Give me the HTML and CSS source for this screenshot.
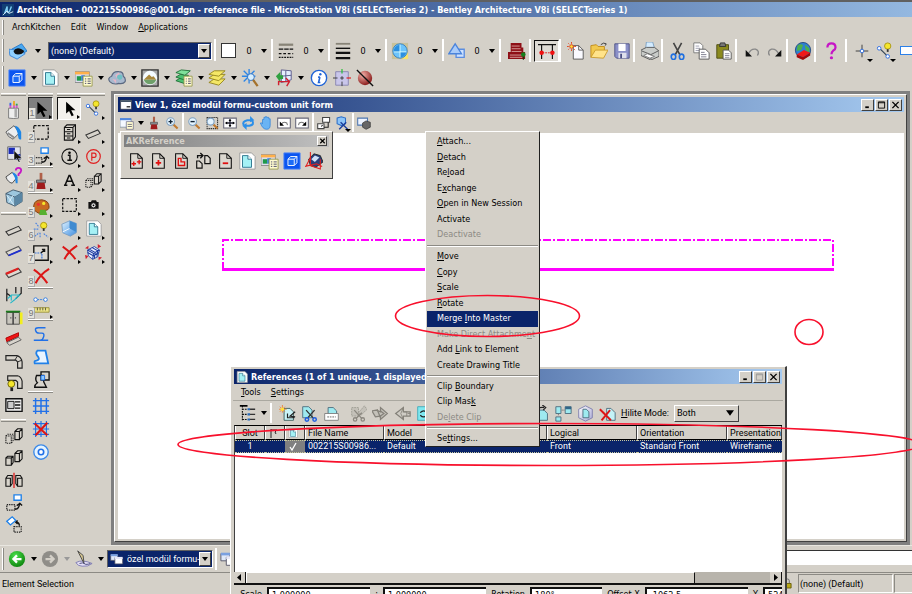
FILE: index.html
```
<!DOCTYPE html>
<html lang="en">
<head>
<meta charset="utf-8">
<title>ArchKitchen - MicroStation V8i</title>
<link rel="stylesheet" href="styles.css">
</head>
<body>
<svg class="sprite" aria-hidden="true">
<defs>
<linearGradient id="gb" x1="0" y1="0" x2="1" y2="1"><stop offset="0" stop-color="#dff2ff"/><stop offset="1" stop-color="#3f8ee0"/></linearGradient>
<linearGradient id="gm" x1="0" y1="0" x2="1" y2="1"><stop offset="0" stop-color="#fff"/><stop offset="1" stop-color="#a9a9d4"/></linearGradient>
<radialGradient id="gr" cx=".35" cy=".3" r=".8"><stop offset="0" stop-color="#f3b0a8"/><stop offset="1" stop-color="#7e0d0d"/></radialGradient>
<radialGradient id="gg" cx=".4" cy=".3" r=".8"><stop offset="0" stop-color="#4be04b"/><stop offset="1" stop-color="#067a06"/></radialGradient>
</defs>
<symbol id="model" viewBox="0 0 20 20"><path d="M3 8l11-6 6 8-11 7z" fill="#4aa8f0" stroke="#2476c8"/><path d="M0 8l10 1 8 4-9 6-8-4z" fill="#8fd0ff" stroke="#3a86d8"/><path d="M5 10q3-5 9-2l3 2q-2 4-7 4-4 0-5-4" fill="#111"/></symbol>
<symbol id="dashes" viewBox="0 0 20 20"><path d="M2 3h16" stroke="#888478" stroke-width="2.500"/><path d="M2 8h16" stroke="#111" stroke-width="1.300" stroke-dasharray="5 1"/><path d="M2 13h16" stroke="#111" stroke-width="1.300" stroke-dasharray="3 2"/><path d="M2 17h16" stroke="#111" stroke-width="1.300" stroke-dasharray="2 1"/></symbol>
<symbol id="weights" viewBox="0 0 20 20"><path d="M2 2h16" stroke="#888478" stroke-width="2"/><path d="M2 7h16" stroke="#111" stroke-width="1.500"/><path d="M2 12h16M2 18h16" stroke="#111" stroke-width="2.500"/></symbol>
<symbol id="globe" viewBox="0 0 20 20"><path d="M1 1h18v18H1z" fill="#c9c29a"/><path d="M12 12h7v7h-7z" fill="#f7e36c"/><circle cx="10" cy="10" r="8" fill="#6cc4fb" stroke="#3a7fbd"/><path d="M3 11h7V3q-7 1-7 8M10 11h7q-1 6-7 6z" fill="#2b8fe0"/><path d="M10 3v14M3 11h14" stroke="#dff" fill="none"/></symbol>
<symbol id="shapes" viewBox="0 0 20 20"><path d="M9 8h9v9H9z" fill="#cfe2ff" stroke="#5b8de0" stroke-width="1.500"/><path d="M8 2l7 11H1z" fill="#a9cbfa" stroke="#4b84dc" stroke-width="1.500"/></symbol>
<symbol id="steps" viewBox="0 0 20 20"><path d="M3 1h12v5h2v5h2v8H0v-8h3z" fill="#8e0f16"/><path d="M4 4.500h9M4 7.500h10M4 10.500h11M2 14.500h14M2 17h14" stroke="#d9a5a0"/><path d="M17 14v6" stroke="#0a3a0a"/><circle cx="17" cy="14" r="2.500" fill="#15801c"/></symbol>
<symbol id="snap" viewBox="0 0 20 20"><path d="M0 3h20M4 3v16M16 3v16" stroke="#111" stroke-width="1.300" fill="none"/><path d="M5 12h10" stroke="#e01010" stroke-dasharray="2 1"/><circle cx="4" cy="12" r="2.500" fill="#f01010"/><circle cx="16" cy="12" r="2.500" fill="#f01010"/></symbol>
<symbol id="new" viewBox="0 0 20 20"><path d="M7 4h6l5 5v10H7z" fill="#fafaff" stroke="#555"/><path d="M13 4v5h5" fill="none" stroke="#555"/><circle cx="5" cy="5" r="2" fill="#ffe23a" stroke="#e0401a"/><path d="M5 0v2M5 8v2M0 5h2M8 5h2M1.500 1.500l1 1M8 8l1 1M1.500 8.500l1-1" stroke="#e0401a"/></symbol>
<symbol id="open" viewBox="0 0 20 20"><path d="M1 17V4l6-1 2 2h7v4" fill="#f1c84e" stroke="#c08a1a"/><path d="M1 17L6 9h14l-5 9z" fill="#ffe38a" stroke="#c99a2a"/><path d="M12 3q3-3 6-1l-1 2" stroke="#333" fill="none"/></symbol>
<symbol id="save" viewBox="0 0 20 20"><path d="M2 2h16v16H4l-2-2z" fill="#8b90c8" stroke="#4c5084"/><path d="M6 2h8v8H6z" fill="#fff"/><path d="M6 12h9v6H6z" fill="#dfe0ec"/><path d="M8 13h2v5H8z" fill="#4c5084"/></symbol>
<symbol id="print" viewBox="0 0 20 20"><path d="M5 8L6 0h7l2 7z" fill="#d4ecff" stroke="#7a9ec0"/><path d="M0 9l6-3h9l5 4v6l-9 4-11-5z" fill="#c9ccc9" stroke="#555"/><path d="M1 10l10 4 8-4M11 14v5" stroke="#555" fill="none"/><path d="M3 15l7 3 5-2-8-3z" fill="#fff" stroke="#777"/></symbol>
<symbol id="cut" viewBox="0 0 20 20"><path d="M5 1l7 13M14 1L7 14" stroke="#444" stroke-width="1.800"/><g fill="none" stroke="#1f6fe0" stroke-width="1.800"><ellipse cx="5" cy="16.500" rx="2.500" ry="3"/><ellipse cx="14" cy="16.500" rx="2.500" ry="3"/></g></symbol>
<symbol id="copy" viewBox="0 0 20 20"><path d="M2 1h7l3 3v8H2z" fill="#fff" stroke="#777"/><path d="M4 4.500h4M4 7h5M4 9.500h5" stroke="#99a"/><path d="M8 8h7l4 4v7H8z" fill="#fff" stroke="#555"/><path d="M10 11.500h4M10 14h6M10 16.500h6" stroke="#778"/></symbol>
<symbol id="paste" viewBox="0 0 20 20"><path d="M2 3h13v15H2z" fill="#8b8a1e" stroke="#4a4a10"/><path d="M5 5l1-4h5l1 4z" fill="#777" stroke="#333"/><path d="M9 9h6l3 3v7H9z" fill="#fff" stroke="#555"/><path d="M11 13h5M11 15h5M11 17h5" stroke="#889"/></symbol>
<symbol id="undo" viewBox="0 0 20 20"><path d="M6 13q3-6 8-5 5 2 2 7" fill="none" stroke="#888" stroke-width="1.500"/><path d="M3 9v7h7z" fill="#111"/></symbol>
<symbol id="redo" viewBox="0 0 20 20"><path d="M14 13q-3-6-8-5-5 2-2 7" fill="none" stroke="#888" stroke-width="1.500"/><path d="M17 9v7h-7z" fill="#111"/></symbol>
<symbol id="help" viewBox="0 0 20 20"><path d="M6 6q0-4.500 4.500-4.500T15 6q0 2-2.500 3.500-2 1.500-2 4" fill="none" stroke="#c616c6" stroke-width="2.500"/><circle cx="10.500" cy="17.500" r="1.800" fill="#c616c6"/></symbol>
<symbol id="book" viewBox="0 0 20 20"><circle cx="10" cy="9" r="8.500" fill="#2e80d0" stroke="#234a80"/><path d="M4 4q4-3 6 0l-2 5-5 1zM12 3l5 4v5l-4-3z" fill="#4eb04a"/><path d="M3 14l8-5 7 3-8 5z" fill="#f01818"/><path d="M3 14v3l7 3 8-5v-3l-8 5z" fill="#a00808"/></symbol>
<symbol id="cross" viewBox="0 0 20 20"><path d="M10 3v14M3 10h14" stroke="#333"/><circle cx="10" cy="10" r="2" fill="#fff" stroke="#2668e0"/></symbol>
<symbol id="bulb" viewBox="0 0 20 20"><path d="M4 7l9 9" stroke="#345" stroke-width="1.300"/><circle cx="3.500" cy="7" r="2" fill="#fff" stroke="#2668e0"/><circle cx="13" cy="16" r="2" fill="#fff" stroke="#2668e0"/><circle cx="13" cy="4.500" r="3.500" fill="#f5e62c" stroke="#a89510"/><path d="M12 8h2v3h-2z" fill="#333"/></symbol>
<symbol id="cube" viewBox="0 0 20 20"><path d="M1 1h18v18H1z" fill="#0b55f0" stroke="#4f86f5"/><path d="M5.500 8h7v7h-7zM5.500 8l3-3h7l-3 3M15.500 5v7l-3 3" fill="#1c6cf6" stroke="#fff"/></symbol>
<symbol id="page" viewBox="0 0 20 20"><path d="M2 1h13l4 4v14H2z" fill="#fff" stroke="#999"/><path d="M5 4h6l4 4v9H5z" fill="#a5f1f5" stroke="#26708a"/><path d="M11 4v4h4" fill="#fff" stroke="#26708a"/></symbol>
<symbol id="levels" viewBox="0 0 20 20"><path d="M0 3h16v12H0z" fill="#dde" stroke="#888"/><path d="M0 3h16v3H0z" fill="#ffb04a"/><path d="M2 8h5v5H2z" fill="#1f9a4a"/><path d="M7 7h4v6H7z" fill="#2878e0"/><path d="M9 8h10v11H9z" fill="#fffbd0" stroke="#999a50"/><path d="M11 11h1.500M14 11h3.500M11 13.500h1.500M14 13.500h3.500M11 16h1.500M14 16h3.500" stroke="#446"/></symbol>
<symbol id="cloud" viewBox="0 0 20 20"><path d="M2 14q-3-4 2-6 2-6 8-5 5 0 5 5 3 2 2 6-2 3-7 2-6 2-10-2z" fill="#a9b9ce" stroke="#5a6880" stroke-width="1.300"/><path d="M8 7l4-3 3 5-4 3zM5 11l4 1v4z" fill="#e6b6c6"/><circle cx="13" cy="9" r="3" fill="#6fc0c4"/></symbol>
<symbol id="photo" viewBox="0 0 20 20"><path d="M1 1h18v18H1z" fill="#aaa" stroke="#333" stroke-width="1.500"/><circle cx="10" cy="10" r="8" fill="#f4fbff"/><path d="M3 12l6-6 3 3 2-1 3 4z" fill="#a9883d"/><path d="M3 12h14q-2 5-7 5t-7-5z" fill="#6fa06a"/></symbol>
<symbol id="layersg" viewBox="0 0 20 20"><g stroke="#207038"><path d="M1 13l5-3 9 1-5 5z" fill="#4cc070"/><path d="M1 9l5-3 9 1-5 5z" fill="#4cc070"/><path d="M1 4l6-3 10 1-6 5z" fill="#7fe09a"/></g><path d="M10 8h9v11h-9z" fill="#fffbd0" stroke="#999a50"/><path d="M12 11h1M14.500 11h3M12 13.500h1M14.500 13.500h3M12 16h1M14.500 16h3" stroke="#446"/></symbol>
<symbol id="layersy" viewBox="0 0 20 20"><g stroke="#93841c" fill="#f4e766"><path d="M1 15l6-4h12l-7 7z"/><path d="M1 10l6-4h12l-7 7z"/><path d="M1 6l6-4h12l-7 6z"/></g></symbol>
<symbol id="star" viewBox="0 0 20 20"><path d="M9 0v16M1 8h15M3 2l12 12M15 2L3 14" stroke="#2b86e8" stroke-width="1.500"/><circle cx="11" cy="9" r="3.800" fill="#d7efff" stroke="#2f6fc0"/><path d="M13.500 12l5 7" stroke="#a5722c" stroke-width="2.500"/></symbol>
<symbol id="axis" viewBox="0 0 20 20"><path d="M7 1l11 1v10l-11 3z" fill="#e6efff" stroke="#558"/><path d="M7 8l11-1M12 2v12" stroke="#558"/><path d="M1 8l5-5v4h3v4H6v4z" fill="#30a040"/><path d="M4 13v5M4 14h11M12 10l4 4-3 5" fill="none" stroke="#d02030" stroke-width="1.600"/></symbol>
<symbol id="info" viewBox="0 0 20 20"><circle cx="10" cy="10" r="8.500" fill="#fff" stroke="#1f63d6" stroke-width="1.500"/><path d="M11 9l-1.500 6h2M9 9h2" stroke="#1f63d6" stroke-width="1.800" fill="none"/><circle cx="11.500" cy="5.800" r="1.300" fill="#1f63d6"/></symbol>
<symbol id="target" viewBox="0 0 20 20"><path d="M3 3h14v15H3z" fill="#c9c6ea" stroke="#8683b0"/><path d="M10 0v5" stroke="#1fbf2f" stroke-width="1.300"/><path d="M15 10h5" stroke="#e02020" stroke-width="1.300"/><path d="M0 10h5M10 14v5M8 10h4M10 8v4" stroke="#333"/></symbol>
<symbol id="noball" viewBox="0 0 20 20"><circle cx="10" cy="10" r="8" fill="url(#gr)"/><path d="M1 1l18 18" stroke="#111" stroke-width="1.500"/></symbol>
<symbol id="jar" viewBox="0 0 20 20"><path d="M6 8V4M10 8V2M13 8V4" stroke="#dd4fd0" stroke-width="2"/><path d="M6 5V2" stroke="#2b6fe8" stroke-width="2"/><path d="M10 5V0" stroke="#e8b020" stroke-width="2"/><path d="M13 5V3" stroke="#30b050" stroke-width="2"/><path d="M4 8h11v11q-5 1-11 0z" fill="#eee" stroke="#777"/><path d="M12 9v9" stroke="#aaa" stroke-width="3"/></symbol>
<symbol id="bucket" viewBox="0 0 20 20"><path d="M1 10l9-7 6 8-7 7q-6-2-8-8z" fill="#eceef0" stroke="#555"/><path d="M3 11l7 5" stroke="#888" stroke-width="2"/><path d="M11 3q4 0 7 7v8q-2 1-3-1l-1-6z" fill="#1e86e6"/></symbol>
<symbol id="bucketq" viewBox="0 0 20 20"><path d="M1 11l7-5 5 6-5 6q-5-1-7-7z" fill="#eceef0" stroke="#444"/><path d="M8 6q4 0 6 5v7h-2l-1-6z" fill="#1e86e6"/><path d="M12 4q0-3 3-3t3 3q0 2-3 4v2" fill="none" stroke="#c616c6" stroke-width="2"/></symbol>
<symbol id="check" viewBox="0 0 20 20"><path d="M3 2h14v14H3z" fill="#dfe2f0" stroke="#666"/><path d="M4 3h7v7H4zM11 10h6v6h-6z" fill="#1a2ab8"/><path d="M10 6l9 9h-4l2 4h-2l-2-4-3 2z" fill="#111" stroke="#fff" stroke-width=".5"/></symbol>
<symbol id="glass" viewBox="0 0 20 20"><path d="M1 5l8-4 10 3v10l-8 5-9-4z" fill="#9cc6de" stroke="#40586c"/><path d="M1 5l10 4 8-5M11 9v10" fill="none" stroke="#40586c"/><path d="M11 9l8-5v10l-8 5z" fill="#5a86a4"/><path d="M4 15l5-8M2 7l8 11" stroke="#dceffa"/></symbol>
<symbol id="wall" viewBox="0 0 20 20"><path d="M1 13l14-6 3 4-14 6z" fill="#d8d4cc" stroke="#333" stroke-width="1.200"/></symbol>
<symbol id="wallb" viewBox="0 0 20 20"><path d="M1 11l14-6 3 4-14 6z" fill="#dedad2" stroke="#555" stroke-width="1.200"/><path d="M4 15l14-6" stroke="#2030d0" stroke-width="2"/></symbol>
<symbol id="wallr" viewBox="0 0 20 20"><path d="M1 11l14-6 3 4-14 6z" fill="#dedad2" stroke="#444" stroke-width="1.200"/><path d="M1 11l14-6" stroke="#e02020" stroke-width="2.500"/></symbol>
<symbol id="wallf" viewBox="0 0 20 20"><path d="M1 9l14-6v4L2 13z" fill="#f01515" stroke="#a00"/><path d="M2 14l13-6 3 3-13 6z" fill="#d8d4cc" stroke="#555"/></symbol>
<symbol id="join" viewBox="0 0 20 20"><path d="M2 3v14M2 8l4 3M12 1v7M18 1v7l-6 6" fill="none" stroke="#222" stroke-width="1.400"/><path d="M3 14l4-4h9l-5 5-5 4M7 10v6" fill="none" stroke="#28b8c8" stroke-width="1.300"/></symbol>
<symbol id="door" viewBox="0 0 20 20"><path d="M2 5h14v13H2z" fill="#c9c6be" stroke="#444"/><path d="M9 5v13M6 11h1M11 11h1" stroke="#333" stroke-width="1.500"/><path d="M1 4h16" stroke="#1b7a1b" stroke-width="2"/><path d="M18 5v13" stroke="#f2ee1c" stroke-width="3"/></symbol>
<symbol id="pipe" viewBox="0 0 20 20"><path d="M1 4h12q5 1 6 7v7h-5v-7l-2-2H1z" fill="#d8d4cc" stroke="#222" stroke-width="1.300"/><path d="M11 9l3-5M14 11l5-2" stroke="#222"/></symbol>
<symbol id="pipeb" viewBox="0 0 20 20"><path d="M3 2h11q4 1 5 6v8h-5V9l-2-2H3z" fill="#d8d4cc" stroke="#222" stroke-width="1.300"/><circle cx="7" cy="11" r="3.800" fill="#f5e62c" stroke="#665c08"/><path d="M6 15h3v4H6z" fill="#222"/></symbol>
<symbol id="panel" viewBox="0 0 20 20"><path d="M1 3h18v14H1z" fill="#eee" stroke="#111" stroke-width="1.500"/><path d="M3 6h7v8H3z" fill="#ccc" stroke="#111"/><path d="M11 6.500h6M11 10h6M11 13.500h6" stroke="#111" stroke-width="1.500"/></symbol>
<symbol id="cubed" viewBox="0 0 20 20"><path d="M1 10h6v8H1zM1 10l2-2h6v7l-2 3" fill="none" stroke="#222" stroke-width="1.200" stroke-dasharray="1.500 1"/><path d="M11 5h5v9h-5zM11 5l3-3h5v9l-3 3M16 5l3-3" fill="#d8d4cc" stroke="#111" stroke-width="1.200"/></symbol>
<symbol id="cubes" viewBox="0 0 20 20"><path d="M1 10h6v8H1zM1 10l2-2h6v7l-2 3M7 10l2-2M11 5h5v9h-5zM11 5l3-3h5v9l-3 3M16 5l3-3" fill="#d8d4cc" stroke="#111" stroke-width="1.200"/></symbol>
<symbol id="mirror" viewBox="0 0 20 20"><path d="M1 8h5v9H1zM1 8l2-3h5v9l-2 3M19 8h-5v9h5zM19 8l-2-3h-5v9l2 3" fill="#d8d4cc" stroke="#111" stroke-width="1.200"/><path d="M10 2v17" stroke="#e02020" stroke-width="1.500"/></symbol>
<symbol id="moveb" viewBox="0 0 20 20"><path d="M10 2h8v6h-8z" fill="#fff" stroke="#1f80e8" stroke-width="1.500"/><path d="M2 13h9v6H2z" fill="none" stroke="#222" stroke-width="1.300" stroke-dasharray="1.500 1"/><path d="M11 18q5 0 5-6l-3 2M16 11l3 3" stroke="#111" fill="none" stroke-width="1.500"/></symbol>
<symbol id="rotb" viewBox="0 0 20 20"><path d="M2 7l6-5 4 4-6 5z" fill="#fff" stroke="#1f80e8" stroke-width="1.500"/><path d="M10 13h8v6h-8z" fill="none" stroke="#222" stroke-width="1.300" stroke-dasharray="1.500 1"/><path d="M16 12q0-4-4-4M14 6l-2 2 2 2" stroke="#111" fill="none" stroke-width="1.500"/></symbol>
<symbol id="arrow" viewBox="0 0 20 20"><path d="M6 2v14l3.500-3 3 6 2.500-1-3-6h5z" fill="#000"/></symbol>
<symbol id="dashbox" viewBox="0 0 20 20"><path d="M2 3h16v15H2z" fill="none" stroke="#111" stroke-width="1.400" stroke-dasharray="3 1.500"/></symbol>
<symbol id="brush" viewBox="0 0 20 20"><path d="M10 1v8" stroke="#b06048" stroke-width="3"/><path d="M5 9h10v3H5z" fill="#8c8c90" stroke="#555"/><path d="M6 12h8l1 7H5z" fill="#a01c1c"/></symbol>
<symbol id="palette" viewBox="0 0 20 20"><path d="M2 8q1-6 9-6 8 1 8 8 0 4-6 4-3 0-2 3-4 1-8-3-2-2-1-6z" fill="#c86a22" stroke="#7a3c10"/><circle cx="7" cy="7" r="1.800" fill="#e83030"/><circle cx="13" cy="6" r="1.800" fill="#f5e62c"/><path d="M9 13h6l2 6H8z" fill="#56b030"/></symbol>
<symbol id="rays" viewBox="0 0 20 20"><circle cx="13" cy="5" r="3.500" fill="#f5e62c" stroke="#a89510"/><path d="M12 8h2v3h-2z" fill="#333"/><path d="M4 2l4 5M2 9h5M3 17l5-4M9 18v-5M13 14l5 4" stroke="#4f86e0" stroke-width="1.300" stroke-dasharray="2 1"/></symbol>
<symbol id="scale" viewBox="0 0 20 20"><path d="M2 2h16v16H2z" fill="#ddd9d1" stroke="#111" stroke-width="1.500"/><path d="M3 10h8v7" fill="none" stroke="#3a78e0" stroke-width="1.300" stroke-dasharray="2 1"/><path d="M10 10l4-4M11 6h3v3" fill="none" stroke="#111" stroke-width="1.500"/></symbol>
<symbol id="del" viewBox="0 0 20 20"><path d="M2 3q8 5 15 15M19 2Q9 8 4 18" stroke="#dc1616" stroke-width="2.300" fill="none"/></symbol>
<symbol id="ruler" viewBox="0 0 20 20"><path d="M6 4h8" stroke="#2a78e0" stroke-dasharray="2 1"/><circle cx="4" cy="4" r="2" fill="#fff" stroke="#2a78e0"/><circle cx="15" cy="4" r="2" fill="#fff" stroke="#2a78e0"/><path d="M2 13h17v5H2z" fill="#ece486" stroke="#98903a"/><path d="M6 13v3M9 13v3M12 13v3M15 13v3" stroke="#554"/></symbol>
<symbol id="curve" viewBox="0 0 20 20"><path d="M15 3H7Q3 3 4 6t4 3h3q3 0 2 4t-4 4H2M9 17h9" fill="none" stroke="#2070e8" stroke-width="1.600"/></symbol>
<symbol id="region" viewBox="0 0 20 20"><path d="M6 3h9l3 14H3q-1-3 2-3 4-1 2-4-4-4-1-7z" fill="#e8f4ff" stroke="#2080e8" stroke-width="2"/></symbol>
<symbol id="bool" viewBox="0 0 20 20"><path d="M10 1h9v9h-9zM5 5h8v7l3 6H3q0-3 3-5-3-3-1-8z" fill="#d8d4cc" stroke="#111" stroke-width="1.500"/><path d="M10 5h4v5h-4z" fill="#8ecbff" stroke="#2070e8"/></symbol>
<symbol id="gridi" viewBox="0 0 20 20"><path d="M4 1v18M10 1v18M16 1v18M1 4h18M1 10h18M1 16h18" stroke="#2070e8" stroke-width="1.600"/></symbol>
<symbol id="griddel" viewBox="0 0 20 20"><path d="M4 1v18M10 1v18M16 1v18M1 4h18M1 10h18M1 16h18" stroke="#2070e8" stroke-width="1.300"/><path d="M3 4l14 13M17 3L4 17" stroke="#dc1616" stroke-width="2.300"/></symbol>
<symbol id="ring" viewBox="0 0 20 20"><circle cx="10" cy="10" r="8" fill="#e6f4ff" stroke="#3a88e8" stroke-width="1.500"/><circle cx="10" cy="10" r="3" fill="#fff" stroke="#2070e8" stroke-width="1.800"/></symbol>
<symbol id="cabinet" viewBox="0 0 20 20"><path d="M4 4l3-3h10v14l-3 4H4z" fill="#d8d4cc" stroke="#111" stroke-width="1.300"/><path d="M4 4h10v15M14 4l3-3M4 9h10M4 14h10M7 6.500h4M7 11.500h4M7 16.500h4" fill="none" stroke="#111" stroke-width="1.200"/></symbol>
<symbol id="circlei" viewBox="0 0 20 20"><circle cx="10" cy="10" r="9" fill="none" stroke="#111" stroke-width="1.300"/><circle cx="10" cy="5.500" r="1.500"/><path d="M8 8.500h2.500v6M7.500 14.500h5.500" fill="none" stroke="#111" stroke-width="1.800"/></symbol>
<symbol id="circlep" viewBox="0 0 20 20"><circle cx="10" cy="10" r="8" fill="none" stroke="#e02020" stroke-width="1.400"/><path d="M8 15V6h3q2 0 2 2.500T11 11H8" fill="none" stroke="#e02020" stroke-width="1.400"/></symbol>
<symbol id="lettera" viewBox="0 0 20 20"><path d="M5 15L9.500 4h1L15 15M6.500 11h6M3.500 15.500h4M12 15.500h4.500" fill="none" stroke="#111" stroke-width="1.800"/></symbol>
<symbol id="camera" viewBox="0 0 20 20"><path d="M4 7h3l1-2h5l1 2h2v8H4z" fill="#111"/><circle cx="10" cy="11" r="3" fill="#ddd" stroke="#111"/><circle cx="10" cy="11" r="1"/></symbol>
<symbol id="bluecube" viewBox="0 0 20 20"><path d="M1 5l9-4 8 3v11l-7 4-9-4z" fill="url(#gb)" stroke="#7a9cc0"/><path d="M10 1v9l8 4V4z" fill="#3f8ad0"/><path d="M2 14l8-4" stroke="#fff"/></symbol>
<symbol id="fan" viewBox="0 0 20 20"><path d="M3 7l8-4 6 4-2 8-6 3-5-4z" fill="#e8ecff" stroke="#1b3aa0"/><path d="M3 7l7 4 7-4M10 11l-1 7M5 6l7 4-1 7M8 4l7 4-1 7M3 10l7 4 6-4" fill="none" stroke="#1b3aa0" stroke-width="1.200"/><path d="M0 5l4-3v4zM15 0l4 3-4 2zM0 13l4 1-3 4zM16 15l4 1-4 3z" fill="#d02030"/></symbol>
<symbol id="docpp" viewBox="0 0 20 20"><path d="M4 2h8l5 5v11H4z" fill="#dcd8d0" stroke="#111" stroke-width="1.200"/><path d="M12 2v5h5" fill="none" stroke="#111"/><path d="M5 13h5M7.500 10.500v5M11 11h5M13.500 8.500v5" stroke="#e01010" stroke-width="1.500"/></symbol>
<symbol id="docp" viewBox="0 0 20 20"><path d="M4 2h8l5 5v11H4z" fill="#dcd8d0" stroke="#111" stroke-width="1.200"/><path d="M12 2v5h5" fill="none" stroke="#111"/><path d="M7.500 12h6M10.500 9v6" stroke="#e01010" stroke-width="2"/></symbol>
<symbol id="docl" viewBox="0 0 20 20"><path d="M4 2h8l5 5v11H4z" fill="#dcd8d0" stroke="#111" stroke-width="1.200"/><path d="M12 2v5h5" fill="none" stroke="#111"/><path d="M7 7h3v4h4v4H7z" fill="none" stroke="#e01010" stroke-width="1.500"/></symbol>
<symbol id="docm" viewBox="0 0 20 20"><path d="M4 2h8l5 5v11H4z" fill="#dcd8d0" stroke="#111" stroke-width="1.200"/><path d="M12 2v5h5" fill="none" stroke="#111"/><path d="M7.500 12.500h6" stroke="#e01010" stroke-width="2"/></symbol>
<symbol id="docs" viewBox="0 0 20 20"><path d="M3 10h3l3 3v5H3zM12 4h3l3 3v6h-6z" fill="#dcd8d0" stroke="#111" stroke-width="1.300"/><path d="M4 7V4h5M7 1l3 3-3 3" fill="none" stroke="#111" stroke-width="1.500"/></symbol>
<symbol id="section" viewBox="0 0 20 20"><path d="M4 8l6-6 7 2 3 7-8 6-6-2z" fill="#28407c" stroke="#222"/><path d="M7 8l4-4 5 2-5 5z" fill="#cfe0f8"/><path d="M6 0v15l11 4V8M0 16l13-3 6 3M1 16l5-10" fill="none" stroke="#e02020" stroke-width="1.200"/></symbol>
<symbol id="win" viewBox="0 0 20 20"><path d="M0 4h16v12H0z" fill="#f4f8ff" stroke="#789"/><path d="M0 3h16v3H0z" fill="#4d86e0"/><path d="M9 8h10v11H9z" fill="#fffbd0" stroke="#668"/><path d="M11 12h6M11 15h6" stroke="#446"/></symbol>
<symbol id="zoomin" viewBox="0 0 20 20"><path d="M12 12l6 6" stroke="#c07a30" stroke-width="3"/><circle cx="8" cy="8" r="5.500" fill="#e4f4ff" stroke="#7fa0c0" stroke-width="1.500"/><path d="M5 8h6M8 5v6" stroke="#123" stroke-width="2"/></symbol>
<symbol id="zoomout" viewBox="0 0 20 20"><path d="M12 12l6 6" stroke="#c07a30" stroke-width="3"/><circle cx="8" cy="8" r="5.500" fill="#e4f4ff" stroke="#7fa0c0" stroke-width="1.500"/><path d="M5 8h6" stroke="#123" stroke-width="2"/></symbol>
<symbol id="zoomw" viewBox="0 0 20 20"><path d="M3 2h15v16H3z" fill="none" stroke="#333" stroke-width="1.500" stroke-dasharray="2 1"/><path d="M12 12l6 6" stroke="#c07a30" stroke-width="3"/><circle cx="8" cy="8" r="5" fill="#e4f4ff" stroke="#7fa0c0" stroke-width="1.500"/></symbol>
<symbol id="fit" viewBox="0 0 20 20"><path d="M1 3h18v14H1z" fill="#fff" stroke="#667" stroke-width="1.500"/><path d="M10 5v10M4 10h12" stroke="#223" stroke-width="2"/><path d="M8 7h4l-2-3zM8 13h4l-2 3zM6 8v4l-3-2zM14 8v4l3-2z"/></symbol>
<symbol id="spin" viewBox="0 0 20 20"><path d="M4 13Q1 8 9 6h6M16 7q4 5-4 7H6" fill="none" stroke="#2c8fe8" stroke-width="3"/><path d="M13 0l6 6-6 3zM8 10v10l-6-6z" fill="#2c8fe8"/></symbol>
<symbol id="hand" viewBox="0 0 20 20"><path d="M5 11V5h2V2h2V1h2v1h3v2h2v9q0 6-5 6-6 0-9-9 2-1 3 1z" fill="#6ab4f4" stroke="#2c7fd8"/></symbol>
<symbol id="prev" viewBox="0 0 20 20"><path d="M1 3h18v14H1z" fill="#fff" stroke="#667" stroke-width="1.500"/><path d="M6 12q3-5 8-2l1 3" fill="none" stroke="#777" stroke-width="1.500"/><path d="M4 8v6h6z"/></symbol>
<symbol id="next" viewBox="0 0 20 20"><path d="M1 3h18v14H1z" fill="#fff" stroke="#667" stroke-width="1.500"/><path d="M14 12q-3-5-8-2l-1 3" fill="none" stroke="#777" stroke-width="1.500"/><path d="M16 8v6h-6z"/></symbol>
<symbol id="copyv" viewBox="0 0 20 20"><path d="M8 2h10v7H8zM1 11h9v7H1z" fill="#fff" stroke="#444" stroke-width="1.500"/><path d="M16 9v7h-6M8 13l-2 2" stroke="#222" fill="none" stroke-width="1.500"/></symbol>
<symbol id="bluex" viewBox="0 0 20 20"><path d="M3 3l6-2 6 2v8l-5 3-7-3z" fill="#8cc4f8" stroke="#2c6fc8" stroke-width="1.500"/><path d="M8 9l10 10M16 9L6 19" stroke="#1c3f9c" stroke-width="2"/></symbol>
<symbol id="clipv" viewBox="0 0 20 20"><path d="M1 3h14v10H1z" fill="#eef4ff" stroke="#4d76b0" stroke-width="1.500"/><path d="M8 10l5-3 6 2v7l-6 3-5-3z" fill="#666" stroke="#333"/></symbol>
<symbol id="viewi" viewBox="0 0 20 20"><path d="M1 2h18v15H1z" fill="#fff" stroke="#333"/><path d="M1 2h18v3H1z" fill="#456"/><path d="M11 13h6" stroke="#111" stroke-width="2"/></symbol>
<symbol id="tree" viewBox="0 0 20 20"><path d="M4 1v17M4 5h6M4 11h6M4 17h6" stroke="#111" fill="none" stroke-width="1.300" stroke-dasharray="2 1"/><path d="M10 5h3M10 11h3M10 17h3" stroke="#2668b8" stroke-width="2.500"/><path d="M13 5h6M13 11h6M13 17h6" stroke="#333" stroke-width="1.500"/><path d="M1 0h9v2H1z"/></symbol>
<symbol id="attach" viewBox="0 0 20 20"><path d="M6 4h7l4 4v10H6z" fill="#c9f4f8" stroke="#355"/><path d="M19 8l-6 5 6 1M10 10v5h8" fill="none" stroke="#222" stroke-width="1.400"/><path d="M4 0v9M0 5h9M1 2l6 6M7 2L1 8" stroke="#f08030"/><circle cx="4" cy="5" r="2" fill="#ffe23a"/></symbol>
<symbol id="doccut" viewBox="0 0 20 20"><path d="M2 2h7l4 4v9H2z" fill="#9eeaf0" stroke="#467"/><path d="M6 6l9 10M16 6L8 15" stroke="#333" stroke-width="1.500"/><g fill="none" stroke="#1f5fe0" stroke-width="1.800"><circle cx="7" cy="17" r="2"/><circle cx="16" cy="17" r="2"/></g></symbol>
<symbol id="docin" viewBox="0 0 20 20"><path d="M6 3h6l4 4v10H6z" fill="#9eeaf0" stroke="#467"/><path d="M2 10h16v8H2z" fill="#fff" stroke="#777"/><path d="M5 14h10" stroke="#aaa" stroke-width="2" stroke-dasharray="2 1"/></symbol>
<symbol id="gcut" viewBox="0 0 20 20"><path d="M10 9l7-8 3 4-7 7zM2 3h8v10H2z" fill="#c4c1b9" stroke="#9a978f" stroke-dasharray="2 1"/><path d="M5 6l9 10M14 9l-7 7" stroke="#8a877f" stroke-width="1.600"/><g fill="none" stroke="#8a877f" stroke-width="1.500"><circle cx="6" cy="17" r="2"/><circle cx="15" cy="17" r="2"/></g></symbol>
<symbol id="gright" viewBox="0 0 20 20"><path d="M0 7l5-1 5 2V3l8 7-8 7v-4l-6 1z" fill="#c4c1b9" stroke="#85827a" stroke-width="1.500"/><path d="M6 5l4 10M10 7l4 3-4 3" stroke="#85827a" fill="none" stroke-width="1.500"/></symbol>
<symbol id="gleft" viewBox="0 0 20 20"><path d="M19 8h-8V3l-9 7 9 7v-4h8z" fill="#cfccc4" stroke="#85827a" stroke-width="1.500"/><path d="M12 8h3v5M16 10h3M11 3l-3 7 3 7" stroke="#85827a" fill="none"/></symbol>
<symbol id="reload" viewBox="0 0 20 20"><path d="M2 2h14v16H2z" fill="#7fe8f0" stroke="#3aa8b8"/><path d="M5 9q4-4 8 0M13 12q-4 4-8 0" fill="none" stroke="#222" stroke-width="1.500"/></symbol>
<symbol id="docrot" viewBox="0 0 20 20"><path d="M7 6h6l4 4v8H7z" fill="#9eeaf0" stroke="#467"/><path d="M3 15V7q3-5 10-4M11 0l4 3-3 3" fill="none" stroke="#222" stroke-width="1.400"/></symbol>
<symbol id="tile" viewBox="0 0 20 20"><path d="M1 2h6v8H1zM12 2h7v8h-7zM1 14h6v5H1z" fill="#9eeaf0" stroke="#467"/><path d="M4 11v2M8 6h3" stroke="#444" stroke-dasharray="1 1"/><path d="M12 2h7v3h-7z" fill="#368"/></symbol>
<symbol id="hex" viewBox="0 0 20 20"><path d="M2 5l8-4 8 4v10l-8 4-8-4z" fill="url(#gm)" stroke="#77a"/><path d="M7 5h4l3 3v7H7z" fill="#9eeaf0" stroke="#467"/></symbol>
<symbol id="docx" viewBox="0 0 20 20"><path d="M9 4h5l5 5v9H9z" fill="#c4f2f6" stroke="#467"/><path d="M1 5l13 13M13 6L3 18" stroke="#dc1616" stroke-width="2.300"/></symbol>
<symbol id="back" viewBox="0 0 20 20"><circle cx="10" cy="10" r="9" fill="url(#gg)"/><path d="M15 10H6M10 6l-4 4 4 4" fill="none" stroke="#fff" stroke-width="2.500"/></symbol>
<symbol id="fwd" viewBox="0 0 20 20"><circle cx="10" cy="10" r="9" fill="#8f8d88"/><path d="M5 10h9M10 6l4 4-4 4" fill="none" stroke="#d4d0c8" stroke-width="2.500"/></symbol>
<symbol id="pen" viewBox="0 0 20 20"><path d="M1 14q7-4 18 1-5 4-11 3-5 0-7-4z" fill="#e4dff6" stroke="#7a78b0"/><path d="M3 1l6 5 1 9z" fill="#d8c890" stroke="#444"/><path d="M5 15q4-2 7 1 3 0 5-1" fill="none" stroke="#447"/></symbol>
<symbol id="views" viewBox="0 0 20 20"><path d="M1 4h10v8H1z" fill="#dfe8f8" stroke="#556"/><path d="M1 3h10v3H1z" fill="#7aa0e0"/><path d="M7 8h11v9H7z" fill="#fff" stroke="#556"/><path d="M7 7h11v3H7z" fill="#e8e8f8"/></symbol>
<symbol id="dn" viewBox="0 0 6 4"><path d="M0 0h6L3 4z"/></symbol>
</svg>

<header class="titlebar app-title"><svg class="logo" viewBox="0 0 14 14"><path d="M0 0h14v14H0z" fill="#123f74"/><path d="M3 11L6 3v6q1 2 3-1l2-5" fill="none" stroke="#7fd0f8" stroke-width="1.600"/><path d="M1 13l5-5 2 3 5-2" fill="none" stroke="#e8f4ff"/></svg><h1>ArchKitchen - 002215S00986@001.dgn - reference file - MicroStation V8i (SELECTseries 2) - Bentley Architecture V8i (SELECTseries 1)</h1></header>
<nav class="menubar"><i class="grip"></i><button>ArchKitchen</button><button>Edit</button><button>Window</button><button><u>A</u>pplications</button></nav>

<div class="bar attributes">
<i class="grip"></i>
<button class="b" aria-label="Active model"><svg><use href="#model"/></svg></button><button class="dd" aria-label="Model options"><svg><use href="#dn"/></svg></button>
<div class="combo level"><select aria-label="Active level"><option>(none) (Default)</option></select><span class="cb"><svg><use href="#dn"/></svg></span></div>
<div class="attr"><i class="sep"></i><button class="b" aria-label="Color"><span class="swatch"></span></button><span>0</span><button class="dd" aria-label="Color list"><svg><use href="#dn"/></svg></button></div>
<div class="attr"><i class="sep"></i><button class="b" aria-label="Line style"><svg><use href="#dashes"/></svg></button><span>0</span><button class="dd" aria-label="Style list"><svg><use href="#dn"/></svg></button></div>
<div class="attr"><i class="sep"></i><button class="b" aria-label="Line weight"><svg><use href="#weights"/></svg></button><span>0</span><button class="dd" aria-label="Weight list"><svg><use href="#dn"/></svg></button></div>
<div class="attr"><i class="sep"></i><button class="b" aria-label="Transparency"><svg><use href="#globe"/></svg></button><span>0</span><button class="dd" aria-label="Transparency list"><svg><use href="#dn"/></svg></button></div>
<div class="attr"><i class="sep"></i><button class="b" aria-label="Priority"><svg><use href="#shapes"/></svg></button><span>0</span><button class="dd" aria-label="Priority list"><svg><use href="#dn"/></svg></button></div>
<div class="tg wide"><i class="sep"></i><button class="b" aria-label="Stairs"><svg><use href="#steps"/></svg></button></div>
<div class="tg wide"><i class="sep"></i><button class="b on" aria-label="Association"><svg><use href="#snap"/></svg></button></div>
<div class="tg"><i class="sep"></i><button class="b" aria-label="New"><svg><use href="#new"/></svg></button><button class="b" aria-label="Open"><svg><use href="#open"/></svg></button><button class="b" aria-label="Save"><svg><use href="#save"/></svg></button></div>
<div class="tg"><i class="sep"></i><button class="b" aria-label="Print"><svg><use href="#print"/></svg></button></div>
<div class="tg"><i class="sep"></i><button class="b" aria-label="Cut"><svg><use href="#cut"/></svg></button><button class="b" aria-label="Copy"><svg><use href="#copy"/></svg></button><button class="b" aria-label="Paste"><svg><use href="#paste"/></svg></button></div>
<div class="tg"><i class="sep"></i><button class="b" aria-label="Undo"><svg><use href="#undo"/></svg></button><button class="b" aria-label="Redo"><svg><use href="#redo"/></svg></button></div>
<div class="tg"><i class="sep"></i><button class="b" aria-label="Explorer"><svg><use href="#book"/></svg></button></div>
<div class="tg"><i class="sep"></i><button class="b" aria-label="Help"><svg><use href="#help"/></svg></button></div>
<div class="tg draw"><i class="sep"></i><button class="b m" aria-label="Place point"><svg><use href="#cross"/></svg></button><button class="b m" aria-label="Smart line"><svg><use href="#bulb"/></svg></button><button class="b" aria-label="Place block"><span class="swatch blue"></span></button></div>
</div>

<div class="bar primary">
<i class="grip"></i>
<div class="pair"><button class="b" aria-label="Models"><svg><use href="#cube"/></svg></button><button class="dd" aria-label="More"><svg><use href="#dn"/></svg></button></div>
<div class="pair"><button class="b" aria-label="References"><svg><use href="#page"/></svg></button><button class="dd" aria-label="More"><svg><use href="#dn"/></svg></button></div>
<div class="pair"><button class="b" aria-label="Raster manager"><svg><use href="#levels"/></svg></button><button class="dd" aria-label="More"><svg><use href="#dn"/></svg></button></div>
<div class="pair"><button class="b" aria-label="Point clouds"><svg><use href="#cloud"/></svg></button><button class="dd" aria-label="More"><svg><use href="#dn"/></svg></button></div>
<div class="pair"><button class="b" aria-label="Saved views"><svg><use href="#photo"/></svg></button><button class="dd" aria-label="More"><svg><use href="#dn"/></svg></button></div>
<div class="pair"><button class="b" aria-label="Level manager"><svg><use href="#layersg"/></svg></button><button class="dd" aria-label="More"><svg><use href="#dn"/></svg></button></div>
<div class="pair"><button class="b" aria-label="Level display"><svg><use href="#layersy"/></svg></button><button class="dd" aria-label="More"><svg><use href="#dn"/></svg></button></div>
<div class="pair"><button class="b" aria-label="Find"><svg><use href="#star"/></svg></button><button class="dd" aria-label="More"><svg><use href="#dn"/></svg></button></div>
<div class="pair"><button class="b" aria-label="ACS"><svg><use href="#axis"/></svg></button><button class="dd" aria-label="More"><svg><use href="#dn"/></svg></button></div>
<div class="tg"><button class="b" aria-label="Information"><svg><use href="#info"/></svg></button><button class="b" aria-label="AccuDraw"><svg><use href="#target"/></svg></button><button class="b" aria-label="Render off"><svg><use href="#noball"/></svg></button></div>
</div>

<main>
<aside class="tools">
<div class="col a">
<i class="hr"></i>
<button class="b" aria-label="Materials"><svg><use href="#jar"/></svg></button><button class="b" aria-label="Fill"><svg><use href="#bucket"/></svg></button><button class="b" aria-label="Select pattern"><svg><use href="#check"/></svg></button><button class="b" aria-label="Query fill"><svg><use href="#bucketq"/></svg></button><button class="b" aria-label="Solid"><svg><use href="#glass"/></svg></button>
<i class="hr"></i>
<button class="b" aria-label="Wall"><svg><use href="#wall"/></svg></button><button class="b" aria-label="Wall base"><svg><use href="#wallb"/></svg></button><button class="b" aria-label="Wall top"><svg><use href="#wallr"/></svg></button><button class="b" aria-label="Join"><svg><use href="#join"/></svg></button><button class="b" aria-label="Door"><svg><use href="#door"/></svg></button><button class="b" aria-label="Panel"><svg><use href="#wallf"/></svg></button><button class="b" aria-label="Pipe"><svg><use href="#pipe"/></svg></button><button class="b" aria-label="Pipe hint"><svg><use href="#pipeb"/></svg></button><button class="b" aria-label="Properties"><svg><use href="#panel"/></svg></button>
<i class="hr"></i>
<button class="b" aria-label="Move cabinet"><svg><use href="#cubed"/></svg></button><button class="b" aria-label="Copy cabinet"><svg><use href="#cubes"/></svg></button><button class="b" aria-label="Mirror cabinet"><svg><use href="#mirror"/></svg></button><button class="b" aria-label="Move"><svg><use href="#moveb"/></svg></button><button class="b" aria-label="Rotate"><svg><use href="#rotb"/></svg></button>
</div>
<div class="col n">
<i class="hr"></i>
<button class="b m dark"><svg><use href="#arrow"/></svg><kbd>1</kbd></button><button class="b"><svg><use href="#dashbox"/></svg><kbd>2</kbd></button><button class="b m"><svg><use href="#moveb"/></svg><kbd>3</kbd></button>
<i class="hr thin"></i>
<button class="b m"><svg><use href="#brush"/></svg><kbd>4</kbd></button>
<i class="hr thin"></i>
<button class="b m"><svg><use href="#palette"/></svg><kbd>5</kbd></button><button class="b m"><svg><use href="#rays"/></svg><kbd>6</kbd></button><button class="b m"><svg><use href="#scale"/></svg><kbd>7</kbd></button><button class="b"><svg><use href="#del"/></svg><kbd>8</kbd></button>
<i class="hr thin"></i>
<button class="b m tall"><svg><use href="#ruler"/></svg><kbd>9</kbd></button>
<i class="hr thin"></i>
<button class="b" aria-label="Curve"><svg><use href="#curve"/></svg></button><button class="b" aria-label="Region"><svg><use href="#region"/></svg></button><button class="b" aria-label="Boolean"><svg><use href="#bool"/></svg></button>
<i class="hr thin"></i>
<button class="b" aria-label="Grid"><svg><use href="#gridi"/></svg></button><button class="b" aria-label="Remove grid"><svg><use href="#griddel"/></svg></button><button class="b" aria-label="Center"><svg><use href="#ring"/></svg></button>
</div>
<div class="col two">
<i class="hr"></i>
<button class="b m picked" aria-label="Element selection"><svg><use href="#arrow"/></svg></button><button class="b m" aria-label="Line"><svg><use href="#bulb"/></svg></button>
<button class="b m" aria-label="Cabinet"><svg><use href="#cabinet"/></svg></button><button class="b m" aria-label="Shelf"><svg><use href="#wall"/></svg></button>
<button class="b m" aria-label="Info"><svg><use href="#circlei"/></svg></button><button class="b m" aria-label="Parametric"><svg><use href="#circlep"/></svg></button>
<button class="b m" aria-label="Text"><svg><use href="#lettera"/></svg></button><button class="b m" aria-label="Copy solid"><svg><use href="#cubed"/></svg></button>
<button class="b m" aria-label="Fence"><svg><use href="#dashbox"/></svg></button><button class="b m" aria-label="Camera"><svg><use href="#camera"/></svg></button>
<button class="b m" aria-label="Primitive"><svg><use href="#bluecube"/></svg></button><button class="b m" aria-label="Reference"><svg><use href="#page"/></svg></button>
<button class="b m" aria-label="Delete"><svg><use href="#del"/></svg></button><button class="b m" aria-label="Explode"><svg><use href="#fan"/></svg></button>
</div>
</aside>
<section class="desk">
<div class="view">
<div class="titlebar"><svg class="logo"><use href="#viewi"/></svg><h2>View 1, özel modül formu-custom unit form</h2><span class="wb"><button aria-label="Minimize"><svg viewBox="0 0 9 9"><path d="M2 7h4" stroke="#000" stroke-width="2"/></svg></button><button aria-label="Maximize"><svg viewBox="0 0 9 9"><path d="M1 1h7v7H1zM1 2h7" fill="none" stroke="#000"/></svg></button><button aria-label="Close"><svg viewBox="0 0 9 9"><path d="M1 1l7 7M8 1L1 8" stroke="#000" stroke-width="1.500"/></svg></button></span></div>
<div class="bar small">
<button class="b" aria-label="View attributes"><svg><use href="#win"/></svg></button><button class="dd" aria-label="More"><svg><use href="#dn"/></svg></button><button class="b" aria-label="Update"><svg><use href="#brush"/></svg></button><button class="b" aria-label="Zoom in"><svg><use href="#zoomin"/></svg></button><i class="sep"></i><button class="b" aria-label="Zoom out"><svg><use href="#zoomout"/></svg></button><button class="b" aria-label="Window area"><svg><use href="#zoomw"/></svg></button><button class="b" aria-label="Fit"><svg><use href="#fit"/></svg></button><button class="b" aria-label="Rotate view"><svg><use href="#spin"/></svg></button><button class="b" aria-label="Pan"><svg><use href="#hand"/></svg></button><button class="b" aria-label="Previous"><svg><use href="#prev"/></svg></button><button class="b" aria-label="Next"><svg><use href="#next"/></svg></button><i class="sep"></i><button class="b" aria-label="Copy view"><svg><use href="#copyv"/></svg></button><button class="b m" aria-label="Perspective"><svg><use href="#bluex"/></svg></button><i class="sep"></i><button class="b" aria-label="Clip volume"><svg><use href="#clipv"/></svg></button>
</div>
<div class="canvas"></div>
</div>
</section>
</main>

<footer>
<div class="bar nav"><i class="grip"></i>
<div class="pair"><button class="b" aria-label="Back"><svg><use href="#back"/></svg></button><button class="dd" aria-label="More"><svg><use href="#dn"/></svg></button></div>
<div class="pair"><button class="b" aria-label="Forward"><svg><use href="#fwd"/></svg></button><button class="dd off" aria-label="More"><svg><use href="#dn"/></svg></button></div>
<div class="pair"><button class="b" aria-label="View groups"><svg><use href="#pen"/></svg></button><button class="dd" aria-label="More"><svg><use href="#dn"/></svg></button></div>
<div class="combo group"><svg class="ci"><use href="#views"/></svg><select aria-label="View group"><option>özel modül formu-custom</option></select><span class="cb"><svg><use href="#dn"/></svg></span></div>
<i class="sep"></i><button class="b" aria-label="Manage groups"><svg><use href="#views"/></svg></button>
<div class="keyin"></div>
</div>
<div class="status"><span>Element Selection</span><svg class="lock" viewBox="0 0 10 12"><path d="M3 6V3q0-2 2-2t2 2v3" fill="none" stroke="#666"/><path d="M1 6h8v5H1z" fill="#b8a818" stroke="#665c08"/></svg><span class="field">(none) (Default)</span><span class="field end"></span></div>
</footer>

<svg class="drawing" viewBox="0 0 614 34" aria-hidden="true"><g fill="none" stroke="#ff00ff" stroke-width="2"><path d="M2 32V2H612V32" stroke-dasharray="8 2 2 2"/><path d="M1 31.500H613" stroke-width="3"/></g></svg>

<div class="palette">
<div class="titlebar"><h2>AKReference</h2><button class="x" aria-label="Close"><svg viewBox="0 0 9 9"><path d="M2 2l5 5M7 2L2 7" stroke="#000" stroke-width="1.300"/></svg></button></div>
<div class="bar"><button class="b" aria-label="Attach many"><svg><use href="#docpp"/></svg></button><button class="b" aria-label="Attach"><svg><use href="#docp"/></svg></button><button class="b" aria-label="Clip"><svg><use href="#docl"/></svg></button><button class="b" aria-label="Move"><svg><use href="#docs"/></svg></button><button class="b" aria-label="Detach"><svg><use href="#docm"/></svg></button><button class="b" aria-label="References"><svg><use href="#page"/></svg></button><button class="b" aria-label="Raster"><svg><use href="#levels"/></svg></button><button class="b" aria-label="Models"><svg><use href="#cube"/></svg></button><button class="b" aria-label="Section"><svg><use href="#section"/></svg></button></div>
</div>

<section class="refs">
<div class="titlebar"><svg class="logo"><use href="#page"/></svg><h2>References (1 of 1 unique, 1 displayed)</h2><span class="wb"><button aria-label="Minimize"><svg viewBox="0 0 9 9"><path d="M2 7h4" stroke="#000" stroke-width="2"/></svg></button><button aria-label="Maximize"><svg viewBox="0 0 9 9"><path d="M1 1h7v7H1zM1 2h7" fill="none" stroke="#999"/></svg></button><button aria-label="Close"><svg viewBox="0 0 9 9"><path d="M1 1l7 7M8 1L1 8" stroke="#000" stroke-width="1.500"/></svg></button></span></div>
<nav class="menubar"><button><u>T</u>ools</button><button><u>S</u>ettings</button></nav>
<div class="bar"><button class="b" aria-label="Hierarchy"><svg><use href="#tree"/></svg></button><button class="dd" aria-label="More"><svg><use href="#dn"/></svg></button><i class="sep"></i><button class="b" aria-label="Attach"><svg><use href="#attach"/></svg></button><button class="b" aria-label="Clip"><svg><use href="#doccut"/></svg></button><button class="b" aria-label="Mask"><svg><use href="#docin"/></svg></button><i class="gap"></i><button class="b" aria-label="Delete clip"><svg><use href="#gcut"/></svg></button><button class="b" aria-label="Forward"><svg><use href="#gright"/></svg></button><button class="b" aria-label="Backward"><svg><use href="#gleft"/></svg></button><button class="b" aria-label="Reload"><svg><use href="#reload"/></svg></button>
<div class="right"><button class="b" aria-label="Rotate"><svg><use href="#docrot"/></svg></button><button class="b" aria-label="Merge"><svg><use href="#tile"/></svg></button><button class="b" aria-label="Master"><svg><use href="#hex"/></svg></button><button class="b" aria-label="Detach"><svg><use href="#docx"/></svg></button><label for="hm"><u>H</u>ilite Mode:</label><div class="drop"><select id="hm"><option>Both</option></select><svg><use href="#dn"/></svg></div></div></div>
<div class="list">
<table>
<colgroup><col class="c30"><col class="c20"><col class="c20"><col class="c80"><col class="c164"><col class="c90"><col class="c90"><col></colgroup>
<thead><tr><th class="mid">Slot</th><th><svg class="ti" viewBox="0 0 10 10"><path d="M3 1v9M3 2h6l-2 2 1 2" fill="none" stroke="#222"/></svg></th><th><svg class="ti"><use href="#page"/></svg></th><th>File Name</th><th>Model</th><th>Logical</th><th>Orientation</th><th>Presentation</th></tr></thead>
<tbody><tr><td class="mid">1</td><td></td><td class="tick"><svg class="ti" viewBox="0 0 10 10"><path d="M2 5l2 3 4-7" fill="none" stroke="#fff" stroke-width="1.300"/></svg></td><td>002215S00986...</td><td>Default</td><td>Front</td><td>Standard Front</td><td>Wireframe</td></tr></tbody>
</table>
</div>
<div class="scroll"><button aria-label="Scroll left"><svg viewBox="0 0 9 9"><path d="M6 1v7L2 4.500z"/></svg></button><span class="thumb"></span><button aria-label="Scroll right"><svg viewBox="0 0 9 9"><path d="M3 1v7l4-3.500z"/></svg></button></div>
<div class="form"><label for="f1">Scale</label><input id="f1" value="1.000000"><label for="f2">:</label><input id="f2" value="1.000000"><label for="f3">Rotation</label><input id="f3" class="n" value="180°"><label for="f4">Offset X</label><input id="f4" value="-1062.5"><label for="f5">Y</label><input id="f5" class="t" value="5246"></div>
</section>

<menu class="context">
<li><button><u>A</u>ttach...</button></li><li><button><u>D</u>etach</button></li><li><button>Re<u>l</u>oad</button></li><li><button>E<u>x</u>change</button></li><li><button><u>O</u>pen in New Session</button></li><li><button>Activate</button></li><li><button disabled>Deactivate</button></li>
<li class="line"></li>
<li><button><u>M</u>ove</button></li><li><button><u>C</u>opy</button></li><li><button><u>S</u>cale</button></li><li><button><u>R</u>otate</button></li><li class="sel"><button>Merge <u>I</u>nto Master</button></li><li><button disabled>Make Direct Attachme<u>n</u>t</button></li><li><button>Add <u>L</u>ink to Element</button></li><li><button>Create Drawing Title</button></li>
<li class="line"></li>
<li><button>Clip <u>B</u>oundary</button></li><li><button>Clip Mas<u>k</u></button></li><li><button disabled>De<u>l</u>ete Clip</button></li>
<li class="line"></li>
<li><button>Se<u>t</u>tings...</button></li>
</menu>

<svg class="marks" viewBox="0 0 912 594" aria-hidden="true"><g fill="none" stroke="#f8102c" stroke-width="1.600"><ellipse cx="487.500" cy="316" rx="92" ry="20.500"/><ellipse cx="809" cy="332" rx="14" ry="12.500"/><ellipse cx="550" cy="444.500" rx="372" ry="21"/></g></svg>
</body>
</html>
```
FILE: styles.css
```
* { box-sizing: border-box; }
html, body { height: 100%; }
body {
  margin: 0;
  overflow: hidden;
  position: relative;
  display: flex;
  flex-direction: column;
  background: #d4d0c8;
  color: #000;
  font: 9px "DejaVu Sans Condensed", "DejaVu Sans", sans-serif;
}
button, select, input { font: inherit; color: inherit; margin: 0; padding: 0; border: 0; background: none; }
button { display: block; }
h1, h2 { margin: 0; font-size: 9px; font-weight: bold; white-space: nowrap; }
svg { display: block; }
.sprite { position: absolute; width: 0; height: 0; }

.titlebar {
  display: flex;
  align-items: center;
  gap: 3px;
  height: 15px;
  padding: 0 2px;
  color: #fff;
  background: linear-gradient(90deg, #0a246a, #a6caf0);
}
.app-title { height: 17px; flex: none; border-top: 2px solid #606060; background: linear-gradient(90deg, #0a246a, #94b8e0); }
.logo { width: 12px; height: 12px; flex: none; }
.wb { display: flex; margin-left: auto; gap: 1px; }
.wb button, .x {
  width: 13px;
  height: 12px;
  padding: 1px;
  background: #d4d0c8;
  border: 1px solid;
  border-color: #fff #404040 #404040 #fff;
}
.wb svg, .x svg { width: 9px; height: 8px; }

.menubar { display: flex; align-items: center; height: 20px; flex: none; gap: 10px; }
.menubar .grip { height: 15px; margin-right: -2px; }
.grip, .sep { width: 2px; border-left: 1px solid #fff; border-right: 1px solid #8c8a84; flex: none; }
.grip { margin-left: 2px; }
.sep { align-self: stretch; margin: 2px 0; border-color: #8c8a84 #fff; }

.bar { display: flex; align-items: center; flex: none; }
.attributes, .primary { height: 27px; overflow: hidden; }
.attributes > *, .primary > * { flex: none; }
.attributes .grip, .primary .grip, .nav .grip { align-self: stretch; margin: 2px 0 2px 2px; }
.b { flex: none; width: 23px; height: 22px; display: grid; place-items: center; position: relative; }
.b svg { width: 18px; height: 18px; }
.m::after {
  content: "";
  position: absolute;
  right: 0;
  bottom: 0;
  border: 3px solid transparent;
  border-top-color: #000;
  border-bottom: 0;
}
.dd { flex: none; width: 13px; height: 20px; display: grid; place-items: center; }
.dd svg { width: 6px; height: 4px; }
.off { color: #999; fill: #999; }

.combo { display: flex; align-items: center; height: 18px; background: #0a246a; border: 1px solid; border-color: #606060 #fff #fff #606060; color: #fff; }
.combo select, .drop select { flex: 1; min-width: 0; appearance: none; outline: 0; padding-left: 2px; }
.combo select, .attr span, .status, th, td, .drop, .right label { font-family: Roboto, "Liberation Sans", sans-serif; font-size: 9px; }
.cb { width: 12px; height: 14px; margin-right: 1px; display: grid; place-items: center; background: #d4d0c8; border: 1px solid; border-color: #fff #404040 #404040 #fff; }
.cb svg { width: 6px; height: 4px; }
.level { width: 164px; margin: 0 2px 0 3px; }
.attributes > .dd { margin: 0 1px 0 2px; }
.attributes > .b { margin-left: 2px; }
.attr { display: grid; grid-template-columns: 2px 25px 16px 14px; width: 57px; align-items: center; text-align: center; align-self: stretch; }
.attr .sep { justify-self: start; height: 22px; }
.attr .b { justify-self: center; }
.attr .dd { width: 14px; }
.swatch { width: 15px; height: 15px; background: #fff; border: 1px solid #333; }
.blue { height: 9px; border-color: #2c80e8; }
.tg { display: flex; align-items: center; align-self: stretch; }
.tg .sep { margin-right: 3px; }
.attributes .wide .b { width: 25px; }
.draw { padding-left: 3px; }
.on { border: 1px solid; border-color: #111 #fff #fff #111; background: #dedbd5; }

.pair { display: flex; width: 33px; align-items: center; }
.pair:nth-child(3n) { width: 34px; }
.pair .b { width: 20px; }
.primary .grip, .nav .grip { margin-right: 3px; }

main { flex: 1; min-height: 0; display: flex; }
.tools { display: flex; width: 111px; flex: none; gap: 2px; padding: 2px 0 0 1px; overflow: hidden; }
.col { display: flex; flex-direction: column; }
.hr { flex: none; height: 3px; margin: 0 0 3px; border-top: 1px solid #fff; border-bottom: 1px solid #8c8a84; }
.n .hr { margin-bottom: 1px; }
.n .hr.thin { height: 2px; margin: 0 0 1px; }
.a { width: 25px; }
.a .b { width: 25px; height: 22px; }
.a .hr ~ .hr { margin: 3px 0; }
.n { width: 25px; }
.n .b { width: 25px; height: 23px; }
.n .tall { height: 29px; }
kbd { position: absolute; left: 0; bottom: 0; width: 7px; font: 9px/10px "Liberation Sans", sans-serif; color: #777; background: #e4e2dc; border: 1px solid #aaa; border-width: 0 1px 1px 0; text-align: center; }
.dark { background: #808080; border: 1px solid; border-color: #222 #fff #fff #222; }
.two { display: grid; grid-template-columns: 24px 24px; align-content: start; column-gap: 0; row-gap: 1px; width: 51px; padding-left: 2px; }
.two .b { width: 24px; height: 23px; }
.two .hr { grid-column: 1 / -1; margin-bottom: 0; }
.two .b svg { width: 17px; height: 17px; }
.tools .m::after { border: 2px solid transparent; border-left: 3px solid #000; border-right: 0; }
.picked { background: #f2f0ec; border: 1px solid; border-color: #111 #fff #fff #111; }

.desk { flex: 1; display: flex; background: #808080; padding: 3px; margin-right: 2px; }
.view {
  flex: 1;
  display: flex;
  flex-direction: column;
  background: #d4d0c8;
  border: 1px solid;
  border-color: #fff #404040 #404040 #fff;
  padding: 2px 2px 2px 3px;
}
.small { height: 21px; }
.small .b { width: 18px; height: 18px; }
.small .b svg { width: 14px; height: 14px; }
.small .dd { width: 9px; }
.small .sep { margin: 1px 1px; }
.canvas { flex: 1; background: #fff; }

footer { flex: none; display: flex; flex-direction: column; }
.nav { height: 27px; border-top: 1px solid #e8e6e0; }
.group { width: 106px; height: 18px; margin-right: 2px; }
.ci { width: 14px; height: 14px; margin: 0 1px 0 2px; flex: none; }
.keyin { flex: 1; height: 15px; margin-bottom: 7px; margin-left: 2px; background: #fff; border-top: 1px solid #333; align-self: flex-end; }
.status { display: flex; align-items: center; height: 22px; border-top: 1px solid #8c8a84; padding-left: 2px; }
.lock { width: 9px; height: 11px; margin-left: auto; margin-right: 6px; }
.field { width: 95px; height: 19px; line-height: 18px; border: 1px solid; border-color: #8c8a84 #fff #fff #8c8a84; padding-left: 1px; margin-right: 1px; }
.end { width: 18px; margin-right: 0; border-right: 0; }

.drawing { position: absolute; left: 221px; top: 238px; width: 614px; height: 34px; }

.palette {
  position: absolute;
  left: 120px;
  top: 131px;
  width: 213px;
  padding: 3px;
  background: #d4d0c8;
  border: 1px solid;
  border-color: #fff #404040 #404040 #fff;
}
.palette .titlebar { height: 12px; background: linear-gradient(90deg, #808080, #c0c0c0); color: #d4d0c8; justify-content: space-between; }
.x { width: 10px; height: 10px; padding: 0; }
.palette .bar { height: 28px; justify-content: space-between; padding: 0 4px 0 1px; }
.palette .bar .b { width: 22px; }

.refs {
  position: absolute;
  left: 230px;
  top: 366px;
  width: 557px;
  height: 240px;
  padding: 2px;
  display: flex;
  flex-direction: column;
  background: #d4d0c8;
  border: 1px solid;
  border-color: #fff #404040 #404040 #fff;
  border-right-width: 2px;
}
.refs .titlebar { flex: none; margin: 0 1px; }
.refs .menubar { height: 17px; padding-left: 8px; border-bottom: 1px solid #aaa8a0; }
.refs .bar { height: 24px; padding-left: 3px; }
.refs .bar .b { width: 22px; }
.refs .bar .b svg { width: 17px; height: 17px; }
.refs .bar .dd { width: 12px; }
.refs .bar > .sep { margin-right: 4px; }
.gap { width: 5px; }
.right { display: flex; align-items: center; margin-left: auto; padding-right: 44px; }
.right label { margin: 0 5px 0 3px; white-space: nowrap; }
.drop { display: flex; align-items: center; width: 65px; height: 17px; padding-right: 4px; border: 1px solid; border-color: #fff #404040 #404040 #fff; }
.drop svg { width: 8px; height: 6px; }
.list { flex: none; height: 147px; background: #fff; border-top: 1px solid #000; border-left: 1px solid #404040; margin: 0 1px; }
table { width: 100%; table-layout: fixed; border-collapse: separate; border-spacing: 0; }
.c30 { width: 30px; } .c20 { width: 20px; } .c80 { width: 79px; } .c164 { width: 163px; } .c90 { width: 90px; }
th { height: 14px; line-height: 12px; padding: 0 0 0 2px; font-weight: normal; text-align: left; background: #d4d0c8; border-right: 1px solid #404040; border-left: 1px solid #fff; border-bottom: 1px solid #000; white-space: nowrap; }
td { height: 13px; line-height: 11px; padding: 0 0 0 3px; color: #fff; background: #0a246a; border: dotted #c8c8a0; border-width: 1px 0; white-space: nowrap; }
.mid { text-align: center; padding: 0; }
.tick { background: #808080; }
.ti { width: 10px; height: 10px; }
.scroll { display: flex; flex: none; height: 13px; margin: 0 1px; background: #b8b4ac; border-bottom: 2px solid #111; }
.scroll button { width: 12px; height: 11px; background: #d4d0c8; border-right: 1px solid #111; display: grid; place-items: center; }
.scroll svg { width: 9px; height: 9px; }
.thumb { width: 449px; margin-right: auto; background: #d4d0c8; border-top: 1px solid #fff; border-left: 1px solid #fff; border-right: 1px solid #111; }
.form { display: flex; align-items: center; gap: 4px; height: 14px; margin: 2px 1px 0 6px; }
.form input { width: 103px; height: 14px; flex: none; background: #fff; padding-left: 3px; border-top: 2px solid #111; border-left: 2px solid #111; }
.form label { flex: 1 1 auto; text-align: center; }
.form .n { width: 72px; } .form .t { width: 19px; }

.context {
  position: absolute;
  left: 425px;
  top: 131px;
  width: 115px;
  margin: 0;
  padding: 2px 1px 0;
  list-style: none;
  background: #d4d0c8;
  border: 1px solid;
  border-color: #fff #202020 #202020 #fff;
}
.context li { height: 16px; padding-left: 10px; }
.context li:nth-child(even) { height: 15px; }
.context button { line-height: 15px; white-space: nowrap; }
.context button:disabled { color: #8c8a84; }
.context .sel { background: #0a246a; color: #fff; }
.context li.line { height: 2px; margin: 2px 0; border-top: 1px solid #8c8a84; border-bottom: 1px solid #fff; }

.marks { position: absolute; left: 0; top: 0; width: 912px; height: 594px; pointer-events: none; }
```
